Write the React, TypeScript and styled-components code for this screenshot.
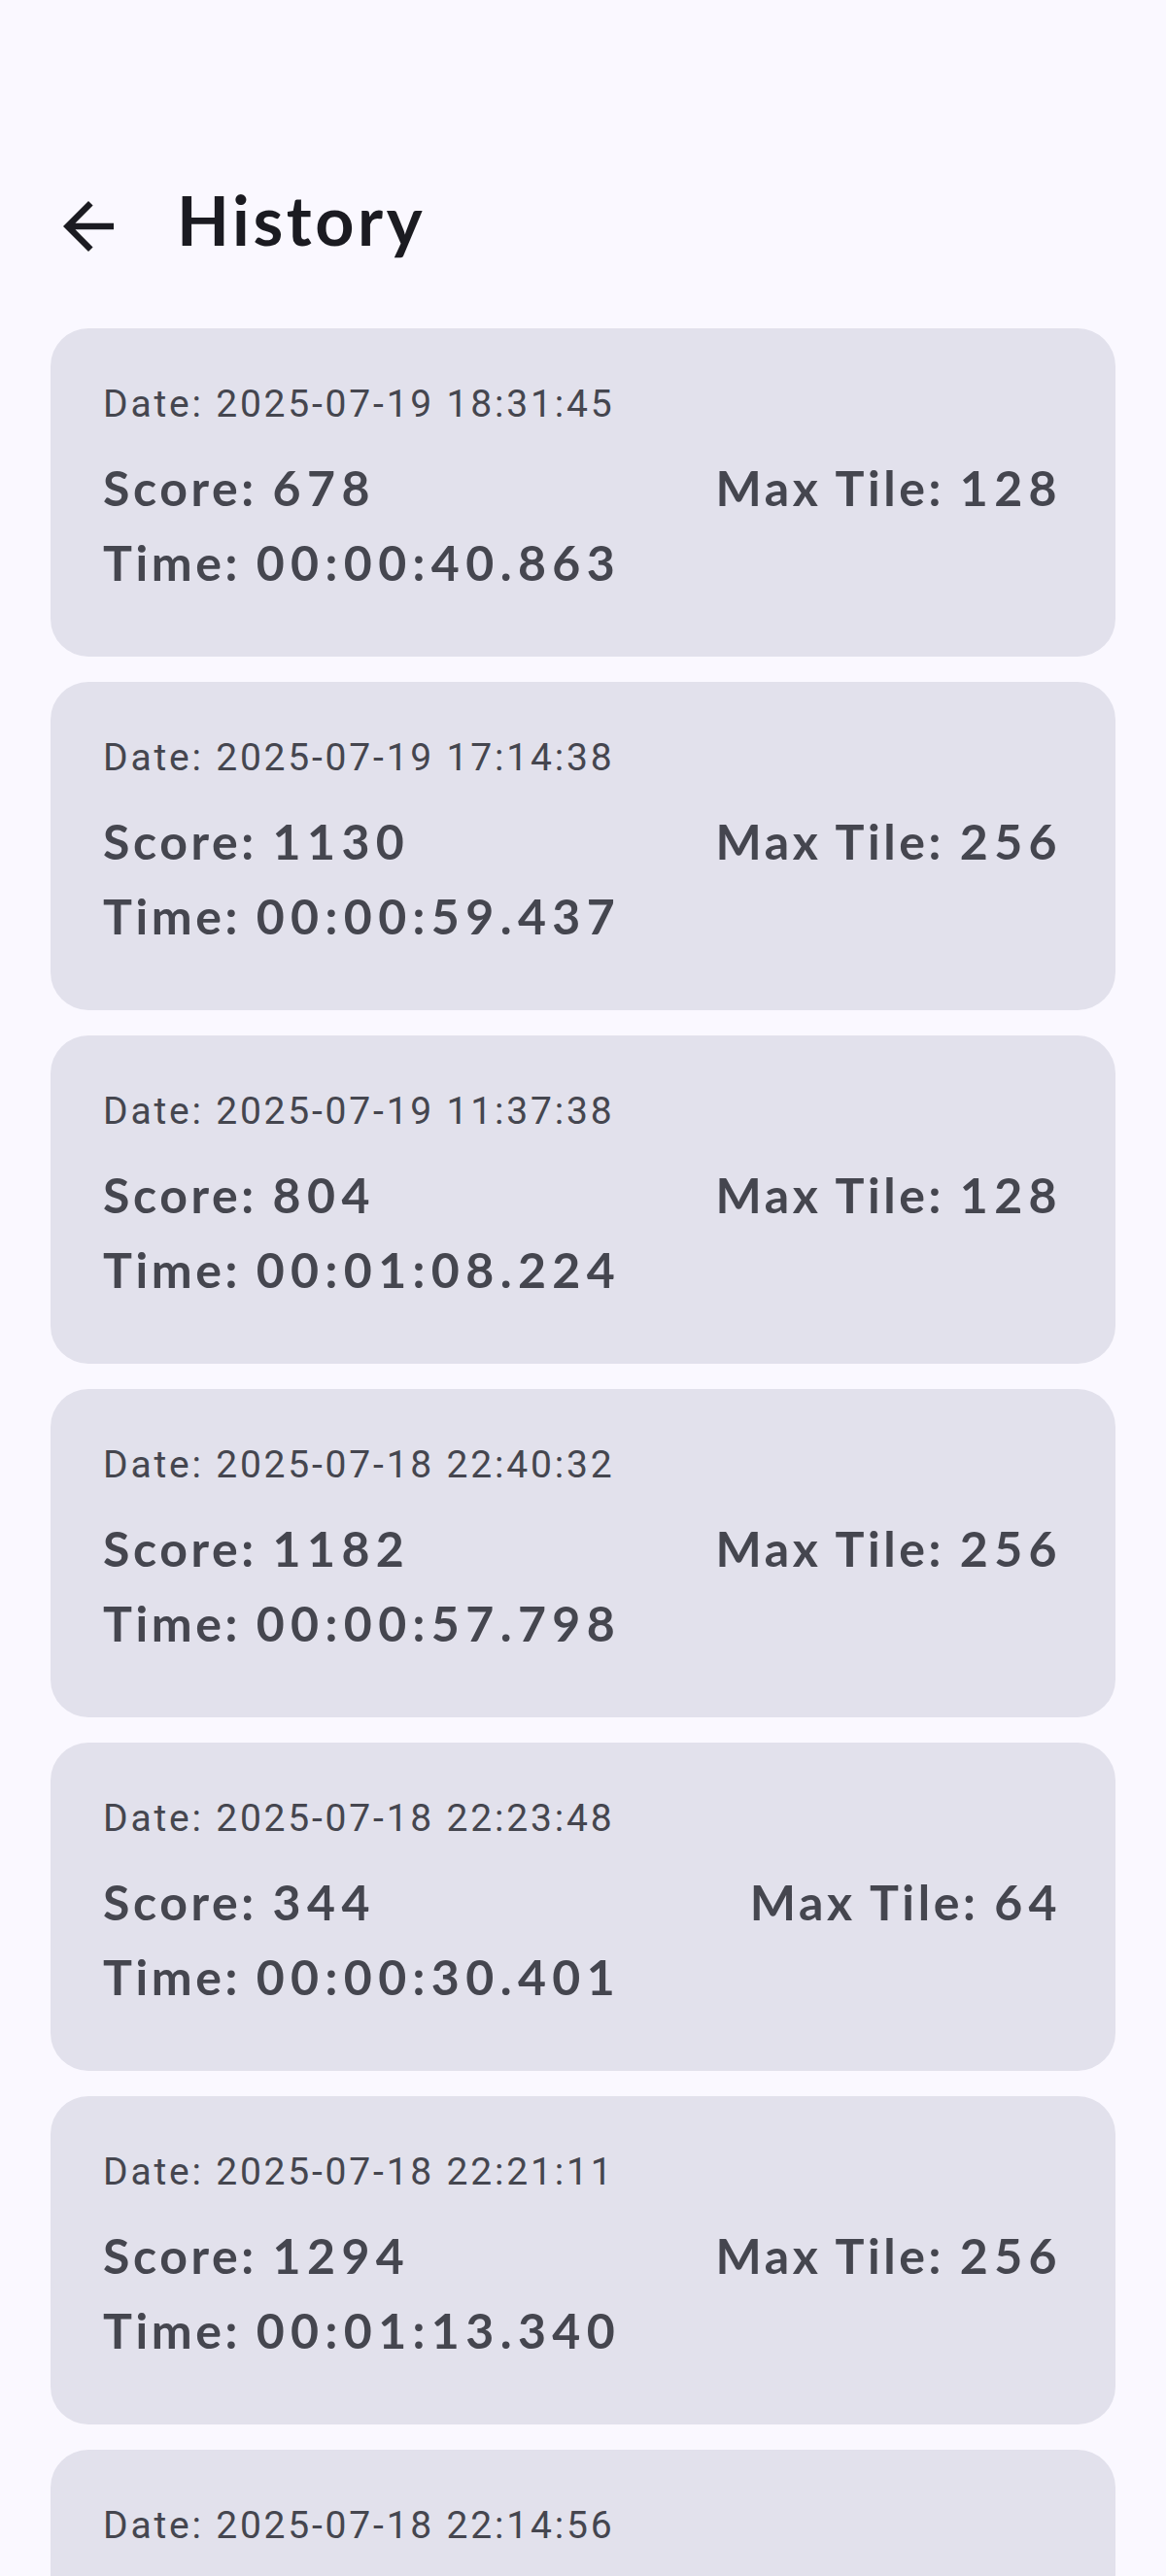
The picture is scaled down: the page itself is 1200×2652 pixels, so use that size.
import React from "react";
import styled, { createGlobalStyle } from "styled-components";

const GlobalStyle = createGlobalStyle`
  html, body {
    margin: 0;
    padding: 0;
    background: #faf8ff;
  }
  * { box-sizing: border-box; }
`;

const Page = styled.div`
  height: 2652px;
  overflow: hidden;
  background: #faf8ff;
  padding: 194px 52px 0;
  font-family: "Lato", "Noto Sans", sans-serif;
`;

const Header = styled.header`
  display: flex;
  align-items: flex-start;
  gap: 52px;
  margin-bottom: 66px;
`;

const BackButton = styled.button`
  width: 78px;
  height: 78px;
  padding: 0;
  border: none;
  background: transparent;
  color: #1b1b21;
  display: flex;
  align-items: center;
  justify-content: center;
  cursor: pointer;
`;

const Title = styled.h1`
  margin: 0;
  font-family: "Lato", "Noto Sans", sans-serif;
  font-weight: 700;
  font-size: 70px;
  line-height: 64px;
  letter-spacing: 3.6px;
  color: #1b1b21;
`;

const List = styled.div`
  display: flex;
  flex-direction: column;
  gap: 26px;
`;

const Card = styled.div`
  background: #e2e1ec;
  border-radius: 39px;
  padding: 52px 54px 58px;
  display: flex;
  flex-direction: column;
`;

const DateLine = styled.div`
  font-family: "Roboto", "Noto Sans", sans-serif;
  font-weight: 400;
  font-size: 39px;
  line-height: 52px;
  letter-spacing: 2.8px;
  color: #45464f;
  margin-bottom: 22px;
`;

const Row = styled.div`
  display: flex;
  justify-content: space-between;
  align-items: baseline;
`;

const Stat = styled.span`
  font-family: "Lato", "Noto Sans", sans-serif;
  font-weight: 700;
  font-size: 50px;
  line-height: 77px;
  letter-spacing: 3.6px;
  color: #45464f;
  white-space: nowrap;
`;

const Num = styled.span`
  letter-spacing: 6.4px;
`;

type Entry = { date: string; score: number; tile: number; time: string };

const entries: Entry[] = [
  { date: "2025-07-19 18:31:45", score: 678, tile: 128, time: "00:00:40.863" },
  { date: "2025-07-19 17:14:38", score: 1130, tile: 256, time: "00:00:59.437" },
  { date: "2025-07-19 11:37:38", score: 804, tile: 128, time: "00:01:08.224" },
  { date: "2025-07-18 22:40:32", score: 1182, tile: 256, time: "00:00:57.798" },
  { date: "2025-07-18 22:23:48", score: 344, tile: 64, time: "00:00:30.401" },
  { date: "2025-07-18 22:21:11", score: 1294, tile: 256, time: "00:01:13.340" },
  { date: "2025-07-18 22:14:56", score: 916, tile: 128, time: "00:00:46.215" },
];

const BackArrow = () => (
  <svg width="78" height="78" viewBox="0 0 24 24" fill="currentColor" aria-hidden="true">
    <path d="M20 11H7.83l5.59-5.59L12 4l-8 8 8 8 1.41-1.41L7.83 13H20v-2z" />
  </svg>
);

export default function App() {
  return (
    <>
      <GlobalStyle />
      <Page>
        <Header>
          <BackButton aria-label="Back">
            <BackArrow />
          </BackButton>
          <Title>History</Title>
        </Header>
        <List>
          {entries.map((e) => (
            <Card key={e.date}>
              <DateLine>Date: {e.date}</DateLine>
              <Row>
                <Stat>
                  Score: <Num>{e.score}</Num>
                </Stat>
                <Stat>
                  Max Tile: <Num>{e.tile}</Num>
                </Stat>
              </Row>
              <Row>
                <Stat>
                  Time: <Num>{e.time}</Num>
                </Stat>
              </Row>
            </Card>
          ))}
        </List>
      </Page>
    </>
  );
}
